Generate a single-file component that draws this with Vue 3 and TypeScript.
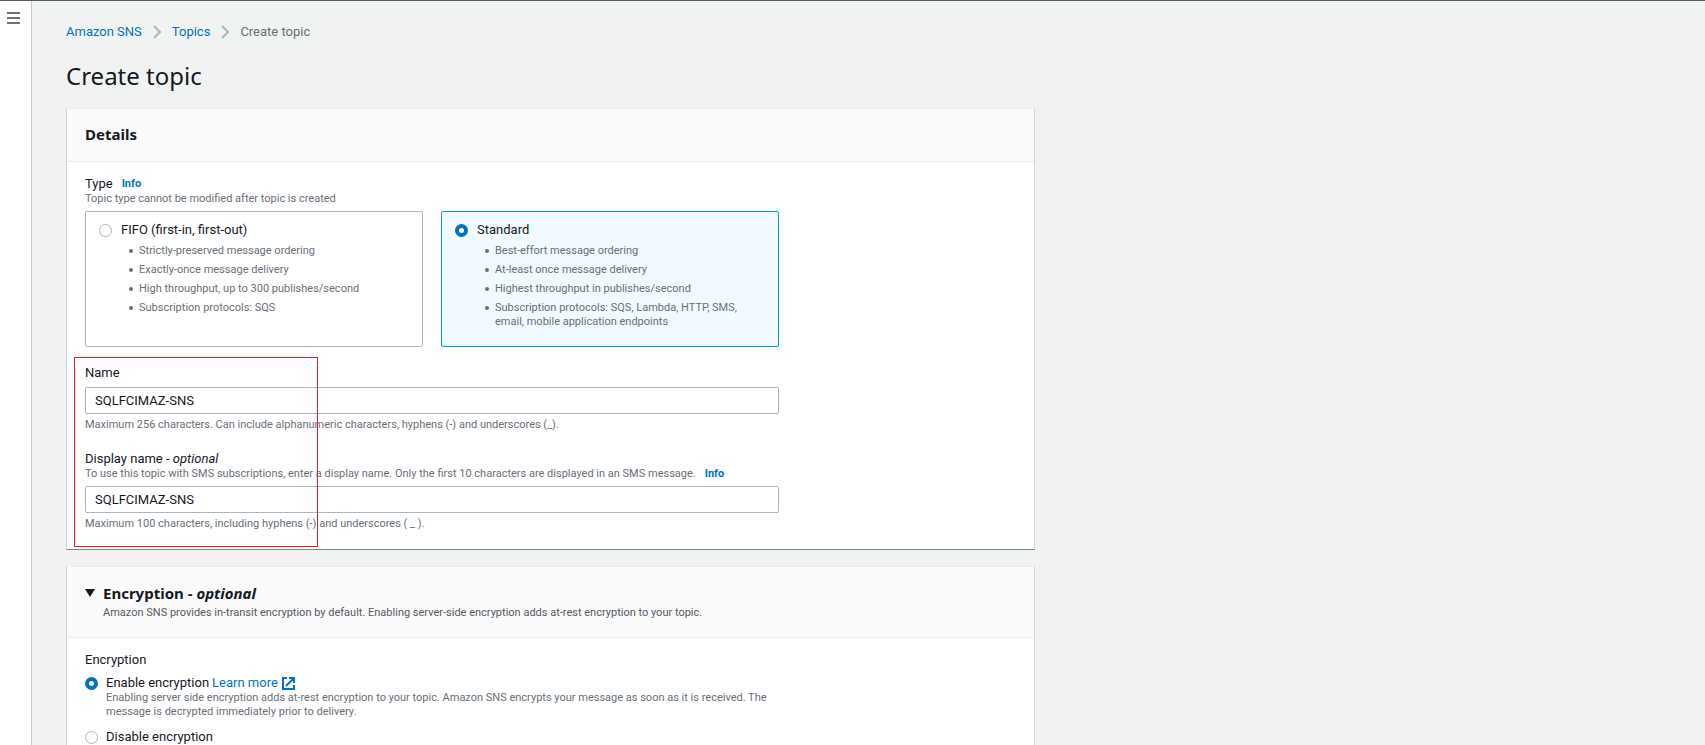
<script setup lang="ts">
import { ref } from 'vue'

interface TopicType {
  id: string
  title: string
  features: string[]
}

const topicTypes: TopicType[] = [
  {
    id: 'fifo',
    title: 'FIFO (first-in, first-out)',
    features: [
      'Strictly-preserved message ordering',
      'Exactly-once message delivery',
      'High throughput, up to 300 publishes/second',
      'Subscription protocols: SQS',
    ],
  },
  {
    id: 'standard',
    title: 'Standard',
    features: [
      'Best-effort message ordering',
      'At-least once message delivery',
      'Highest throughput in publishes/second',
      'Subscription protocols: SQS, Lambda, HTTP, SMS, email, mobile application endpoints',
    ],
  },
]

const topicType = ref('standard')
const name = ref('SQLFCIMAZ-SNS')
const displayName = ref('SQLFCIMAZ-SNS')
const encryption = ref('enable')
const encryptionOpen = ref(true)
</script>

<template>
  <div class="shell">
    <aside class="rail">
      <button class="menu" type="button" aria-label="Open navigation">
        <svg width="13" height="12" viewBox="0 0 13 12" aria-hidden="true">
          <path d="M0 1h13M0 6h13M0 11h13" stroke="#6b727a" stroke-width="2" />
        </svg>
      </button>
    </aside>

    <main class="content">
      <nav class="crumbs" aria-label="Breadcrumb">
        <a href="#">Amazon SNS</a>
        <svg width="8" height="14" viewBox="0 0 8 14" aria-hidden="true">
          <path d="M1 1l6 6-6 6" />
        </svg>
        <a href="#">Topics</a>
        <svg width="8" height="14" viewBox="0 0 8 14" aria-hidden="true">
          <path d="M1 1l6 6-6 6" />
        </svg>
        <span>Create topic</span>
      </nav>

      <h1>Create topic</h1>

      <section class="panel">
        <header class="panel-head">
          <h2>Details</h2>
        </header>
        <div class="panel-body">
          <div class="label-row">
            <span id="type-label" class="label">Type</span>
            <a class="info" href="#">Info</a>
          </div>
          <p class="hint">Topic type cannot be modified after topic is created</p>
          <div class="tiles" role="radiogroup" aria-labelledby="type-label">
            <label
              v-for="t in topicTypes"
              :key="t.id"
              class="tile"
              :class="{ selected: topicType === t.id }"
            >
              <input v-model="topicType" class="radio" type="radio" name="topic-type" :value="t.id" />
              <span class="tile-text">
                <span class="label">{{ t.title }}</span>
                <ul>
                  <li v-for="f in t.features" :key="f">{{ f }}</li>
                </ul>
              </span>
            </label>
          </div>

          <div class="fields">
            <div class="field">
              <label class="label" for="topic-name">Name</label>
              <input id="topic-name" v-model="name" class="text roomy" type="text" />
              <p class="hint below">
                Maximum 256 characters. Can include alphanumeric characters, hyphens (-) and underscores (_).
              </p>
            </div>
            <div class="field">
              <label class="label" for="display-name">Display name - <em>optional</em></label>
              <p class="hint">
                To use this topic with SMS subscriptions, enter a display name. Only the first 10 characters are
                displayed in an SMS message.<a class="info" href="#">Info</a>
              </p>
              <input id="display-name" v-model="displayName" class="text" type="text" />
              <p class="hint below">Maximum 100 characters, including hyphens (-) and underscores ( _ ).</p>
            </div>
            <div class="marker"></div>
          </div>
        </div>
      </section>

      <section class="panel">
        <header class="panel-head expandable">
          <button
            class="toggle"
            type="button"
            aria-label="Toggle encryption section"
            :aria-expanded="encryptionOpen"
            @click="encryptionOpen = !encryptionOpen"
          >
            <svg width="10" height="8" viewBox="0 0 10 8" aria-hidden="true">
              <path d="M0 0h10L5 8z" fill="#16191f" />
            </svg>
          </button>
          <div>
            <h2>Encryption - <em>optional</em></h2>
            <p class="description">
              Amazon SNS provides in-transit encryption by default. Enabling server-side encryption adds at-rest
              encryption to your topic.
            </p>
          </div>
        </header>
        <div v-if="encryptionOpen" class="panel-body">
          <span id="encryption-label" class="label">Encryption</span>
          <div class="options" role="radiogroup" aria-labelledby="encryption-label">
            <div class="option">
              <input id="enc-on" v-model="encryption" class="radio" type="radio" name="encryption" value="enable" />
              <div>
                <div class="option-title">
                  <label class="label" for="enc-on">Enable encryption</label>
                  <a class="more" href="#">
                    Learn more
                    <svg width="13" height="13" viewBox="0 0 13 13" aria-hidden="true">
                      <path d="M5 1H1v11h11V8M7 1h5v5M12 1L4 9" />
                    </svg>
                  </a>
                </div>
                <p class="hint">
                  Enabling server side encryption adds at-rest encryption to your topic. Amazon SNS encrypts your
                  message as soon as it is received. The message is decrypted immediately prior to delivery.
                </p>
              </div>
            </div>
            <div class="option">
              <input id="enc-off" v-model="encryption" class="radio" type="radio" name="encryption" value="disable" />
              <label class="label" for="enc-off">Disable encryption</label>
            </div>
          </div>
        </div>
      </section>
    </main>
  </div>
</template>

<style>
body {
  margin: 0;
  background: #f1f3f3;
}
</style>

<style scoped>
.shell {
  display: flex;
  box-sizing: border-box;
  height: 100vh;
  overflow: hidden;
  border-top: 1px solid #545b64;
  background: #f1f3f3;
  color: #16191f;
  font-family: Roboto, "Liberation Sans", sans-serif;
  font-size: 13px;
  line-height: 16px;
}
.rail {
  flex: 0 0 31px;
  background: #fff;
  border-right: 1px solid #c9cdcd;
}
.menu {
  display: block;
  margin: 11px 0 0 7px;
  padding: 0;
  border: 0;
  background: none;
  line-height: 0;
  cursor: pointer;
}
.content {
  flex: 1;
  max-width: 969px;
  margin: 0 34px;
  padding-top: 23px;
}
a {
  color: #0073bb;
  text-decoration: none;
}
.crumbs {
  display: flex;
  align-items: center;
  gap: 11px;
  color: #687078;
}
.crumbs svg {
  fill: none;
  stroke: #aab7b8;
  stroke-width: 2;
}
h1,
h2,
p,
ul {
  margin: 0;
}
h1 {
  margin: 20px 0 17px;
  font: 400 24px/31px "Noto Sans", "Open Sans", sans-serif;
}
h2 {
  font: 700 15px/22px "Noto Sans", "Open Sans", sans-serif;
}
.panel {
  margin-bottom: 16px;
  border: 1px solid #d0d5d5;
  border-top-color: #eaeded;
  border-bottom-color: #79878a;
  background: #fff;
}
.panel-head {
  padding: 14px 18px 16px;
  border-bottom: 1px solid #eaeded;
  background: #fafafa;
}
.expandable {
  display: flex;
  gap: 8px;
  padding: 15px 18px;
}
.toggle {
  width: 10px;
  height: 22px;
  padding: 0;
  border: 0;
  background: none;
  line-height: 0;
  cursor: pointer;
}
.description {
  color: #545b64;
  font-size: 11px;
  line-height: 18px;
}
.panel-body {
  max-width: 694px;
  padding: 14px 18px 18px;
}
.label {
  display: block;
}
.label-row {
  display: flex;
  gap: 9px;
}
.info {
  font-size: 11px;
  font-weight: 700;
}
.hint {
  color: #687078;
  font-size: 11px;
  line-height: 14px;
}
.hint .info {
  margin-left: 9px;
}
.tiles {
  display: grid;
  grid-template-columns: 1fr 1fr;
  gap: 18px;
  margin-top: 5px;
}
.tile {
  display: flex;
  gap: 9px;
  box-sizing: border-box;
  min-height: 136px;
  padding: 10px 13px;
  border: 1px solid #aab7b8;
  border-radius: 2px;
}
.tile.selected {
  border-color: #00a1c9;
  background: #f1faff;
}
.radio {
  flex: none;
  appearance: none;
  box-sizing: border-box;
  width: 13px;
  height: 13px;
  margin: 2px 0 0;
  border: 1px solid #aab7b8;
  border-radius: 50%;
  background: #fff;
}
.radio:checked {
  border: 4px solid #0073bb;
}
.tile-text {
  flex: 1;
}
ul {
  padding: 6px 0 0 8px;
  color: #687078;
  font-size: 11px;
  line-height: 14px;
  list-style: none;
}
li {
  display: flex;
  gap: 6px;
  margin-bottom: 5px;
}
li::before {
  content: "";
  flex: none;
  width: 4px;
  height: 4px;
  margin-top: 5px;
  border-radius: 50%;
  background: #687078;
}
.fields {
  position: relative;
  padding-top: 18px;
}
.field + .field {
  margin-top: 19px;
}
.text {
  display: block;
  box-sizing: border-box;
  width: 100%;
  height: 27px;
  margin-top: 5px;
  padding: 0 9px;
  border: 1px solid #aab7b8;
  border-radius: 2px;
  background: #fff;
  color: #16191f;
  font: inherit;
}
.roomy {
  margin-top: 6px;
}
.below {
  margin-top: 4px;
}
.marker {
  position: absolute;
  top: 10px;
  bottom: -16px;
  left: -11px;
  box-sizing: border-box;
  width: 244px;
  border: 1px solid #ed1c24;
  pointer-events: none;
}
.options {
  display: grid;
  gap: 10px;
  margin-top: 7px;
}
.option {
  display: flex;
  gap: 8px;
}
.option-title {
  display: flex;
  gap: 3px;
}
.more {
  display: flex;
  align-items: center;
  gap: 4px;
}
.more svg {
  fill: none;
  stroke: #0073bb;
  stroke-width: 2;
}
</style>
